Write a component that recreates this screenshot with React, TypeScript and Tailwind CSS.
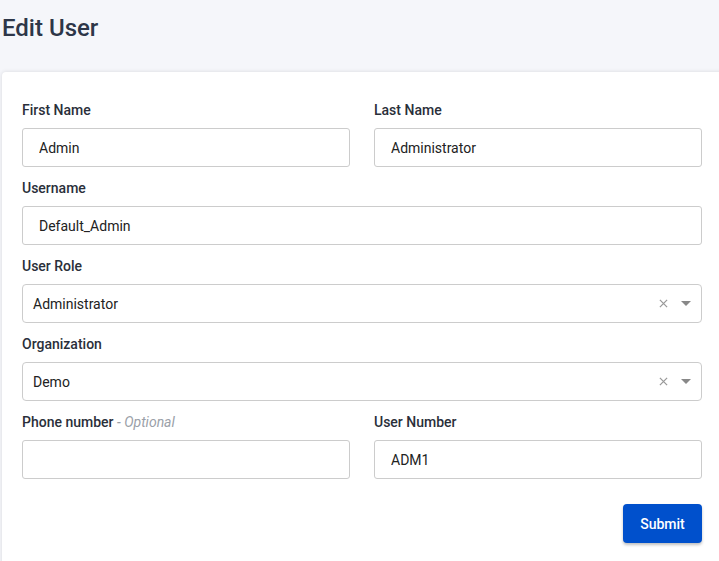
import React from "react";

const font = { fontFamily: "Roboto, 'Liberation Sans', sans-serif" };

function Field({ label, value, optional }: { label: string; value?: string; optional?: boolean }) {
  return (
    <div className="flex flex-col">
      <label className="h-5 mb-2 text-sm font-medium leading-5 text-[#2a2f3a]">
        {label}
        {optional && <span className="font-normal italic text-[#9aa0a8]"> - Optional</span>}
      </label>
      <input
        defaultValue={value}
        className="h-[39px] rounded-[3px] border border-[#cccccc] bg-white px-4 text-sm text-[#222222] outline-none"
      />
    </div>
  );
}

function SelectField({ label, value }: { label: string; value: string }) {
  return (
    <div className="flex flex-col">
      <label className="h-5 mb-2 text-sm font-medium leading-5 text-[#2a2f3a]">{label}</label>
      <div className="flex h-[39px] items-center rounded-[4px] border border-[#cccccc] bg-white pl-[10px] pr-[10px]">
        <span className="flex-1 text-sm text-[#222222]">{value}</span>
        <svg width="9" height="9" viewBox="0 0 10 10" className="mr-[13px]">
          <path d="M1 1 L9 9 M9 1 L1 9" stroke="#999999" strokeWidth="1.4" />
        </svg>
        <svg width="10" height="5" viewBox="0 0 10 5">
          <path d="M0 0 L10 0 L5 5 Z" fill="#888888" />
        </svg>
      </div>
    </div>
  );
}

export default function App() {
  return (
    <div className="h-[561px] w-[719px] overflow-hidden bg-[#f5f6fa]" style={font}>
      <h1 className="pl-[2px] pt-[13px] text-[24px] font-medium leading-[30px] text-[#2d3648]">Edit User</h1>
      <div className="ml-[2px] mt-[29px] w-[720px] rounded-tl-[4px] bg-white px-5 pt-7 pb-8 shadow-[0_0_4px_rgba(0,0,0,0.12)]">
        <div className="flex flex-col gap-[11px]">
          <div className="grid grid-cols-2 gap-6">
            <Field label="First Name" value="Admin" />
            <Field label="Last Name" value="Administrator" />
          </div>
          <Field label="Username" value="Default_Admin" />
          <SelectField label="User Role" value="Administrator" />
          <SelectField label="Organization" value="Demo" />
          <div className="grid grid-cols-2 gap-6">
            <Field label="Phone number" optional />
            <Field label="User Number" value="ADM1" />
          </div>
        </div>
        <div className="mt-[25px] flex justify-end">
          <button className="h-[39px] w-[79px] rounded-[4px] bg-[#0050cc] text-sm font-medium text-white shadow-[0_2px_3px_rgba(0,0,0,0.25)]">
            Submit
          </button>
        </div>
      </div>
    </div>
  );
}
